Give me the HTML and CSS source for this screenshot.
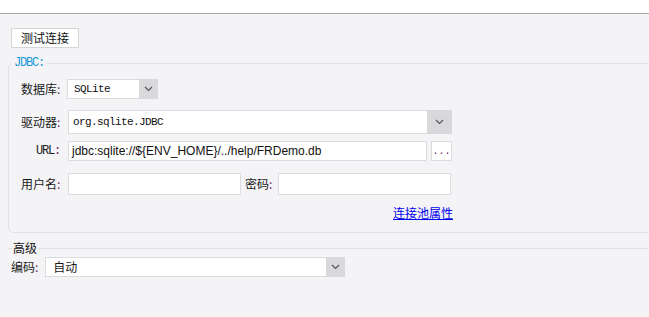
FILE: index.html
```html
<!DOCTYPE html>
<html>
<head>
<meta charset="utf-8">
<link rel="stylesheet" href="styles.css">
</head>
<body>
<div class="topbar"></div>
<div class="main">
  <button class="btn-test">测试连接</button>
  <fieldset class="group">
    <legend class="group-title">JDBC:</legend>
    <div class="row row-db">
      <label class="lbl">数据库<span class="colon">:</span></label>
      <div class="select sel-db"><span class="mono">SQLite</span><span class="arrow"><svg width="9" height="6" viewBox="0 0 9 6"><polyline points="1,1 4.5,4.5 8,1" fill="none" stroke="#555" stroke-width="1.2"/></svg></span></div>
    </div>
    <div class="row row-driver">
      <label class="lbl">驱动器<span class="colon">:</span></label>
      <div class="select sel-driver"><span class="mono">org.sqlite.JDBC</span><span class="arrow arrow-wide"><svg width="9" height="6" viewBox="0 0 9 6"><polyline points="1,1 4.5,4.5 8,1" fill="none" stroke="#555" stroke-width="1.2"/></svg></span></div>
    </div>
    <div class="row row-url">
      <label class="lbl lbl-mono">URL<span class="colon">:</span></label>
      <div class="input url-input">jdbc:sqlite://${ENV_HOME}/../help/FRDemo.db</div>
      <div class="dots">...</div>
    </div>
    <div class="row row-user">
      <label class="lbl">用户名<span class="colon">:</span></label>
      <div class="input half"></div>
      <label class="lbl-pw">密码<span class="colon">:</span></label>
      <div class="input half"></div>
    </div>
    <div class="link-row"><a class="pool-link" href="#">连接池属性</a></div>
  </fieldset>
  <fieldset class="adv">
    <legend class="adv-title">高级</legend>
    <div class="row row-enc">
      <label class="lbl-enc">编码<span class="colon">:</span></label>
      <div class="select sel-enc"><span class="enc-text">自动</span><span class="arrow"><svg width="9" height="6" viewBox="0 0 9 6"><polyline points="1,1 4.5,4.5 8,1" fill="none" stroke="#555" stroke-width="1.2"/></svg></span></div>
    </div>
  </fieldset>
</div>
</body>
</html>
```
FILE: styles.css
```css
* { box-sizing: border-box; }
html, body { margin: 0; padding: 0; }
body {
  background: #f4f4f6;
  font-family: "Noto Sans CJK SC", "Liberation Sans", sans-serif;
  font-size: 12px;
  color: #1a1a1a;
  width: 649px;
  height: 317px;
  overflow: hidden;
}
.topbar {
  height: 14px;
  background: #ffffff;
  border-bottom: 1px solid #a6a6a6;
}
.main {
  padding-top: 14px;
}
.btn-test {
  display: block;
  margin: 0 0 0 11px;
  width: 68px;
  height: 20px;
  padding: 0;
  background: #ffffff;
  border: 1px solid #d6d6d8;
  border-radius: 0;
  font-family: "Noto Sans CJK SC", sans-serif;
  font-size: 12px;
  line-height: 18px;
  color: #111;
}
.group {
  margin: 9px -30px 0 8px;
  padding: 10px 0 12px 0;
  border: 1px solid #e2e2e4;
  border-radius: 5px;
  min-width: 0;
}
.group-title {
  margin-left: 3px;
  padding: 0 2px;
  font-family: "Liberation Mono", monospace;
  font-size: 12px;
  letter-spacing: -1.2px;
  line-height: 12px;
  color: #1b97dc;
}
.row {
  display: flex;
  align-items: center;
}
.lbl {
  width: 51px;
  padding-left: 12px;
  margin-right: 8px;
  text-align: right;
  white-space: nowrap;
  line-height: 14px;
}
.lbl-mono {
  font-family: "Liberation Mono", monospace;
  font-size: 12px;
  letter-spacing: -1.2px;
}
.colon { color: #6a2a6a; }
.mono {
  font-family: "Liberation Mono", monospace;
  font-size: 11px;
  letter-spacing: -0.6px;
  color: #111;
}
.select {
  display: flex;
  align-items: center;
  background: #ffffff;
  border: 1px solid #dcdcde;
}
.select > span:first-child { flex: 1; }
.arrow {
  display: flex;
  align-items: center;
  justify-content: center;
  align-self: stretch;
  width: 19px;
  margin: -1px -1px -1px 0;
  background: #d9d9dc;
}
.arrow-wide { width: 25px; }
.sel-db {
  width: 91px;
  height: 20px;
  padding-left: 6px;
  margin-left: -1px;
}
.row-driver { margin-top: 11px; }
.sel-driver {
  width: 384px;
  height: 24px;
  padding-left: 4px;
}
.row-url { margin-top: 7px; }
.input {
  background: #ffffff;
  border: 1px solid #dcdcde;
}
.url-input {
  width: 359px;
  height: 20px;
  padding-left: 3px;
  font-family: "Liberation Sans", sans-serif;
  font-size: 12px;
  line-height: 18px;
  color: #111;
  white-space: nowrap;
  overflow: hidden;
}
.dots {
  width: 21px;
  height: 20px;
  margin-left: 4px;
  background: #ffffff;
  border: 1px solid #dcdcde;
  font-family: "Liberation Mono", monospace;
  font-size: 10px;
  line-height: 20px;
  text-align: center;
  color: #6a2a6a;
  letter-spacing: 0;
}
.row-user { margin-top: 12px; }
.half {
  width: 173px;
  height: 22px;
}
.lbl-pw {
  margin: 0 6px 0 4px;
  line-height: 14px;
  white-space: nowrap;
}
.link-row {
  display: flex;
  justify-content: flex-end;
  width: 444px;
  margin-top: 11px;
}
.pool-link {
  color: #0000f0;
  text-decoration: underline;
  line-height: 14px;
}
.adv {
  margin: 9px -30px 0 8px;
  padding: 0;
  border: none;
  border-top: 1px solid #e2e2e4;
  min-width: 0;
}
.adv-title {
  margin-left: 4px;
  padding: 0 1px;
  line-height: 12px;
  color: #111;
}
.row-enc {
  margin-top: 3px;
}
.lbl-enc {
  margin-left: 3px;
  margin-right: 7px;
  line-height: 14px;
}
.sel-enc {
  width: 300px;
  height: 20px;
  padding-left: 7px;
}
.enc-text { line-height: 14px; }
```
